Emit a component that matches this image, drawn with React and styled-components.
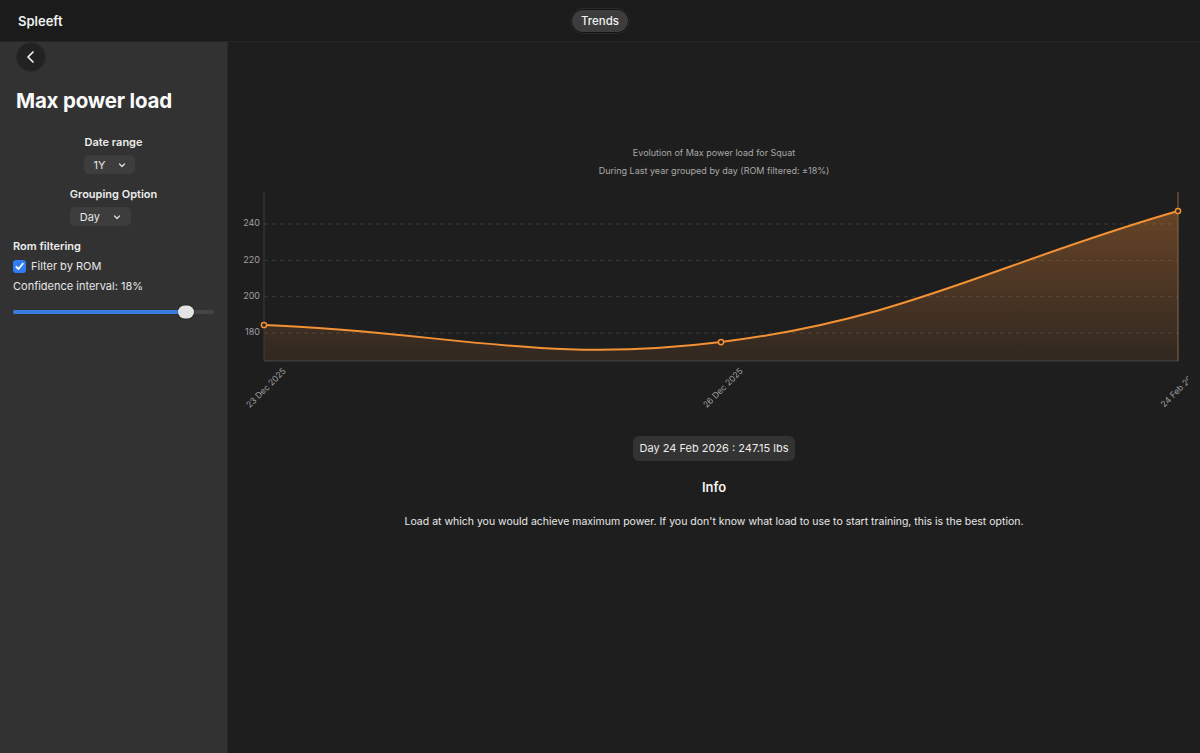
import styled, { createGlobalStyle } from "styled-components"

const GlobalStyle = createGlobalStyle`
  html, body {
    margin: 0;
    padding: 0;
    background: #1e1e1e;
    font-family: Inter, "Liberation Sans", sans-serif;
    color: #ececec;
  }
`

// chart geometry, svg coordinates
const W = 948
const H = 290
const LEFT = 24
const RIGHT = 938
const TOP = 62
const BOTTOM = 231
const points = [
  { label: "23 Dec 2025", value: 184.4 },
  { label: "26 Dec 2025", value: 175 },
  { label: "24 Feb 2026", value: 247.15 },
]
const ticks = [240, 220, 200, 180]

const yOf = (v) => 203 - (v - 180) * (109 / 60)
const xOf = (i) => LEFT + ((RIGHT - LEFT) * i) / (points.length - 1)

// chart.js style spline with tension
const buildPath = (pts, tension = 0.4) => {
  const cps = pts.map((p, i) => {
    const prev = pts[i - 1] || p
    const next = pts[i + 1] || p
    const d01 = Math.hypot(p.x - prev.x, p.y - prev.y)
    const d12 = Math.hypot(next.x - p.x, next.y - p.y)
    const sum = d01 + d12 || 1
    const fa = (tension * d01) / sum
    const fb = (tension * d12) / sum
    return {
      prev: { x: p.x - fa * (next.x - prev.x), y: p.y - fa * (next.y - prev.y) },
      next: { x: p.x + fb * (next.x - prev.x), y: p.y + fb * (next.y - prev.y) },
    }
  })
  let d = `M${pts[0].x},${pts[0].y}`
  for (let i = 1; i < pts.length; i++) {
    const a = cps[i - 1].next
    const b = cps[i].prev
    d += ` C${a.x},${a.y} ${b.x},${b.y} ${pts[i].x},${pts[i].y}`
  }
  return d
}

const Chart = () => {
  const pts = points.map((p, i) => ({ x: xOf(i), y: yOf(p.value) }))
  const line = buildPath(pts)
  const area = `${line} L${RIGHT},${BOTTOM} L${LEFT},${BOTTOM} Z`

  return (
    <ChartSvg viewBox={`0 0 ${W} ${H}`} width={W} height={H}>
      <defs>
        <linearGradient id="fill" x1="0" y1={TOP + 20} x2="0" y2={BOTTOM} gradientUnits="userSpaceOnUse">
          <stop offset="0" stopColor="#f28c38" stopOpacity="0.34" />
          <stop offset="1" stopColor="#f28c38" stopOpacity="0.09" />
        </linearGradient>
      </defs>
      <text x={474} y={24} textAnchor="middle" dominantBaseline="middle" fill="#a8a8a8" fontSize="9">
        Evolution of Max power load for Squat
      </text>
      <text x={474} y={42} textAnchor="middle" dominantBaseline="middle" fill="#a8a8a8" fontSize="9">
        During Last year grouped by day (ROM filtered: ±18%)
      </text>

      {ticks.map((t) => (
        <g key={t}>
          <line x1={LEFT} x2={RIGHT} y1={yOf(t)} y2={yOf(t)} stroke="#3a3a3a" strokeDasharray="4 4" />
          <text x={LEFT - 4} y={yOf(t)} textAnchor="end" dominantBaseline="middle" fill="#a0a0a0" fontSize="9">
            {t}
          </text>
        </g>
      ))}

      <path d={area} fill="url(#fill)" />
      <line x1={LEFT} x2={LEFT} y1={TOP} y2={BOTTOM} stroke="#3c3c3c" />
      <line x1={LEFT} x2={RIGHT} y1={BOTTOM} y2={BOTTOM} stroke="#474747" />
      <line x1={RIGHT} x2={RIGHT} y1={TOP} y2={BOTTOM} stroke="#8a6446" />
      <path d={line} fill="none" stroke="#f39234" strokeWidth="2" />
      {pts.map((p, i) => (
        <circle key={i} cx={p.x} cy={p.y} r="2.6" fill="#2a2420" stroke="#f39234" strokeWidth="1.5" />
      ))}

      {points.map((p, i) => (
        <text
          key={p.label}
          transform={`translate(${xOf(i) + 18}, ${BOTTOM + 6}) rotate(-45)`}
          textAnchor="end"
          dominantBaseline="hanging"
          fill="#a0a0a0"
          fontSize="8.5"
        >
          {p.label}
        </text>
      ))}
    </ChartSvg>
  )
}

const Chevron = () => (
  <svg width="8" height="8" viewBox="0 0 8 8">
    <path d="M1.5 3 L4 5.5 L6.5 3" fill="none" stroke="#e0e0e0" strokeWidth="1.2" strokeLinecap="round" strokeLinejoin="round" />
  </svg>
)

export default function App() {
  return (
    <>
      <GlobalStyle />
      <Page>
        <TopBar>
          <Brand>Spleeft</Brand>
          <TabRing>
            <Tab>Trends</Tab>
          </TabRing>
          <span />
        </TopBar>
        <Body>
          <Sidebar>
            <BackButton>
              <svg width="14" height="14" viewBox="0 0 14 14">
                <path d="M9 2 L4 7 L9 12" fill="none" stroke="#f2f2f2" strokeWidth="1.7" strokeLinecap="round" strokeLinejoin="round" />
              </svg>
            </BackButton>
            <Title>Max power load</Title>
            <Field>
              <FieldLabel>Date range</FieldLabel>
              <Select $pad={9}>
                1Y <Chevron />
              </Select>
            </Field>
            <Field>
              <FieldLabel>Grouping Option</FieldLabel>
              <Select $pad={10}>
                Day <Chevron />
              </Select>
            </Field>
            <RomBlock>
              <FieldLabel>Rom filtering</FieldLabel>
              <CheckRow>
                <Check>
                  <svg width="11" height="11" viewBox="0 0 11 11">
                    <path d="M2.3 5.8 L4.5 8 L8.8 2.8" fill="none" stroke="#fff" strokeWidth="1.8" strokeLinecap="round" strokeLinejoin="round" />
                  </svg>
                </Check>
                Filter by ROM
              </CheckRow>
              <Plain>Confidence interval: 18%</Plain>
              <Slider>
                <SliderFill style={{ width: "86%" }} />
                <Thumb style={{ left: "86%" }} />
              </Slider>
            </RomBlock>
          </Sidebar>
          <Main>
            <Chart />
            <ValueTag>Day 24 Feb 2026 : 247.15 lbs</ValueTag>
            <InfoTitle>Info</InfoTitle>
            <InfoText>
              Load at which you would achieve maximum power. If you don't know what load to use to start training, this is the best option.
            </InfoText>
          </Main>
        </Body>
      </Page>
    </>
  )
}

const Page = styled.div`
  display: flex;
  flex-direction: column;
  height: 753px;
  overflow: hidden;
`

const TopBar = styled.header`
  height: 42px;
  flex-shrink: 0;
  background: #1b1b1b;
  border-bottom: 1px solid #262626;
  box-sizing: border-box;
  display: grid;
  grid-template-columns: 1fr auto 1fr;
  align-items: center;
  padding: 0 18px;
`

const Brand = styled.div`
  font-size: 13px;
  font-weight: 600;
  color: #f0f0f0;
`

const TabRing = styled.div`
  padding: 1px;
  border-radius: 14px;
  background: #151515;
  border: 1px solid #2a2a2a;
`

const Tab = styled.div`
  height: 22px;
  padding: 0 9px;
  border-radius: 11px;
  background: #3d3d3d;
  font-size: 11.5px;
  font-weight: 500;
  line-height: 22px;
  color: #f2f2f2;
`

const Body = styled.div`
  flex: 1;
  display: flex;
  min-height: 0;
`

const Sidebar = styled.aside`
  width: 228px;
  flex-shrink: 0;
  background: #323232;
  border-right: 1px solid #2a2a2a;
  box-sizing: border-box;
  padding: 0 13px;
  display: flex;
  flex-direction: column;
`

const BackButton = styled.div`
  width: 30px;
  height: 30px;
  margin-left: 3px;
  border-radius: 50%;
  background: #222222;
  border: 1px solid #2b2b2b;
  box-sizing: border-box;
  display: flex;
  align-items: center;
  justify-content: center;
`

const Title = styled.h1`
  margin: 16px 0 0 3px;
  font-size: 20.5px;
  font-weight: 700;
  line-height: 26px;
  color: #fafafa;
  letter-spacing: -0.2px;
`

const Field = styled.div`
  align-self: center;
  display: flex;
  flex-direction: column;
  align-items: flex-start;
  gap: 6px;
  margin-top: 21px;

  & + & {
    margin-top: 13px;
  }
`

const FieldLabel = styled.div`
  font-size: 11px;
  font-weight: 600;
  line-height: 14px;
  color: #ececec;
`

const Select = styled.div`
  height: 19px;
  display: flex;
  align-items: center;
  gap: 13px;
  padding: 0 ${(p) => p.$pad}px;
  border-radius: 5px;
  background: #3d3d3d;
  font-size: 11px;
  color: #e6e6e6;
`

const RomBlock = styled.div`
  display: flex;
  flex-direction: column;
  align-items: flex-start;
  margin-top: 13px;
  gap: 6px;
`

const CheckRow = styled.div`
  display: flex;
  align-items: center;
  gap: 5px;
  font-size: 11px;
  color: #e6e6e6;
`

const Check = styled.span`
  width: 13px;
  height: 13px;
  border-radius: 3px;
  background: #2f7cf6;
  display: flex;
  align-items: center;
  justify-content: center;
`

const Plain = styled.div`
  font-size: 11px;
  color: #e6e6e6;
`

const Slider = styled.div`
  position: relative;
  align-self: stretch;
  margin: 11px 0 0 0;
  height: 4px;
  border-radius: 2px;
  background: #454545;
`

const SliderFill = styled.div`
  height: 100%;
  border-radius: 2px;
  background: #3b7ee0;
`

const Thumb = styled.div`
  position: absolute;
  top: 50%;
  width: 16px;
  height: 13px;
  border-radius: 7px;
  background: #e4e4e4;
  transform: translate(-50%, -50%);
  box-shadow: 0 0 2px rgba(0, 0, 0, 0.5);
`

const Main = styled.main`
  flex: 1;
  display: flex;
  flex-direction: column;
  align-items: center;
  padding: 88px 12px 0;
  background: #1e1e1e;
`

const ChartSvg = styled.svg`
  display: block;
  font-family: Inter, "Liberation Sans", sans-serif;
  overflow: hidden;
`

const ValueTag = styled.div`
  margin-top: 16px;
  height: 25px;
  padding: 0 7px;
  border-radius: 6px;
  background: #333333;
  font-size: 11px;
  line-height: 25px;
  color: #ececec;
`

const InfoTitle = styled.div`
  margin-top: 18px;
  font-size: 13px;
  font-weight: 600;
  line-height: 17px;
  color: #f2f2f2;
`

const InfoText = styled.p`
  margin: 18px 0 0;
  font-size: 10.5px;
  line-height: 15px;
  color: #e8e8e8;
  text-align: center;
`
